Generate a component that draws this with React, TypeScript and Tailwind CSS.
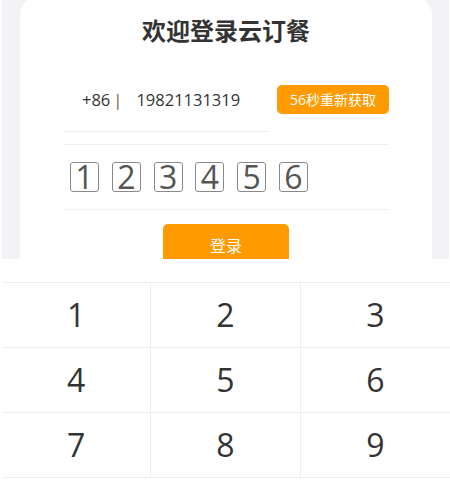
const keys = ["1", "2", "3", "4", "5", "6", "7", "8", "9"];
const code = ["1", "2", "3", "4", "5", "6"];

const font = {
  fontFamily: '"Open Sans", "Noto Sans CJK SC", sans-serif',
};

const App = () => {
  return (
    <div className="w-[450px] h-[496px] bg-white pl-[2px] overflow-hidden" style={font}>
      <div className="w-[447px] h-[259px] bg-[#f3f3f5] overflow-hidden">
        <div className="ml-[18px] -mt-[3px] w-[412px] h-[300px] bg-white rounded-t-[18px] px-[43px] pt-[18px]">
          <h1 className="text-center text-[24px] leading-[32px] font-bold text-[#333]">
            欢迎登录云订餐
          </h1>

          <div className="mt-[38px] flex items-start justify-between">
            <div className="w-[207px] pt-[3px] pb-[19px] pl-[19px] border-b border-[#f0f0f0] text-[16.5px] leading-[24px] text-[#333]">
              <span>+86</span>
              <span className="ml-[3px] text-[#6b5a48]">|</span>
              <span className="ml-[14px]">19821131319</span>
            </div>
            <button className="w-[112px] h-[29px] rounded-[5px] bg-[#ff9a00] text-white text-[14px] leading-[29px]">
              56秒重新获取
            </button>
          </div>

          <div className="mt-[12px] border-t border-b border-[#f0f0f0] pt-[17px] pb-[17px] pl-[7px] flex gap-[12.8px]">
            {code.map((c) => (
              <div
                key={c}
                className="w-[29px] h-[30px] border border-[#8a8a8a] rounded-[3px] flex justify-center text-[32px] leading-[28px] text-[#555]"
              >
                {c}
              </div>
            ))}
          </div>

          <button className="block mx-auto mt-[14px] w-[126px] h-[44px] rounded-[5px] bg-[#ff9a00] text-white text-[16px]">
            登录
          </button>
        </div>
      </div>

      <div className="w-[448px] pt-[23px] bg-white">
        <div className="grid grid-cols-3 border-t border-[#eeeeee]">
          {keys.map((k, i) => (
            <div
              key={k}
              className={`h-[65px] flex items-center justify-center border-b border-[#eeeeee] text-[32px] text-[#333] ${
                i % 3 !== 2 ? "border-r" : ""
              }`}
            >
              {k}
            </div>
          ))}
        </div>
      </div>
    </div>
  );
};

export default App;
